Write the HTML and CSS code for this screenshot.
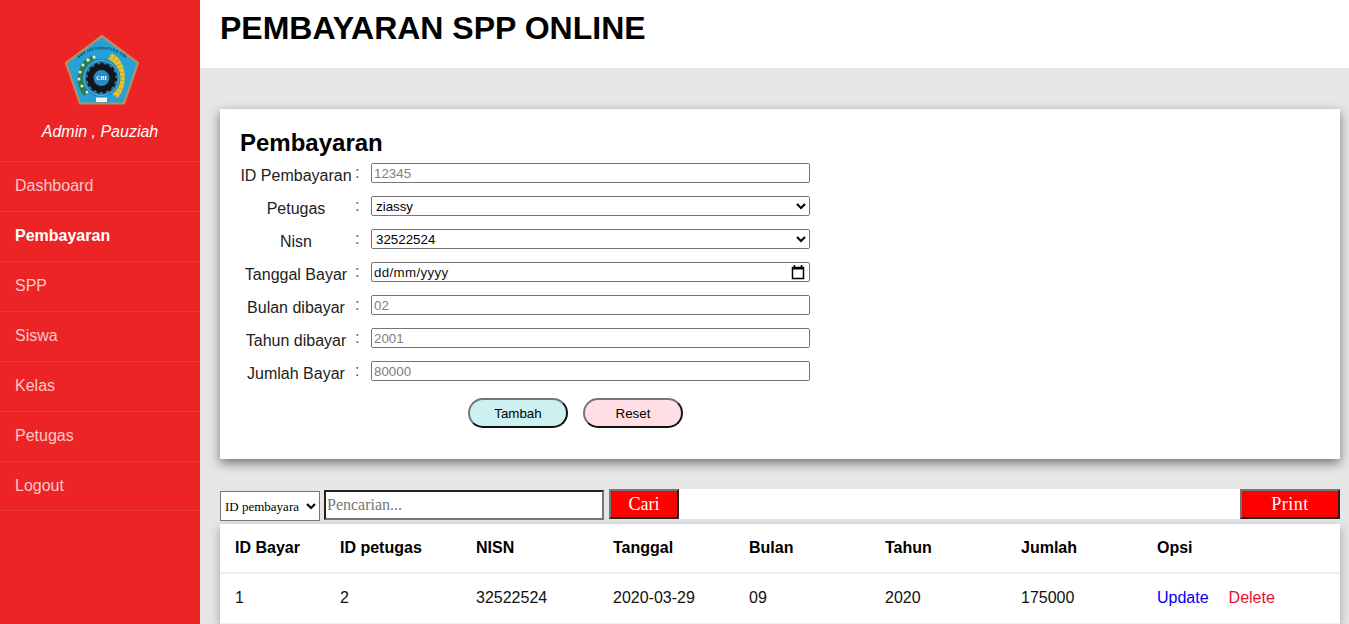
FILE: index.html
```html
<!DOCTYPE html>
<html lang="id">
<head>
<meta charset="utf-8">
<title>Pembayaran SPP Online</title>
<link rel="stylesheet" href="styles.css">
</head>
<body>
<div class="app">
  <aside class="sidebar">
    <div class="brand">
      <svg class="logo" viewBox="0 0 78 72" width="78" height="72" aria-hidden="true">
        <defs><path id="arc" d="M13 27 A35 35 0 0 1 65 27"/></defs>
        <polygon points="39,2 75,29 61,69.500 17,69.500 3,29" fill="#27a0d6" stroke="#b5915f" stroke-width="2.200" stroke-linejoin="round"/>
        <text class="logo-arc" fill="#173a5a" text-anchor="middle"><textPath href="#arc" startOffset="50%">SMK INFORMATIKA CBI</textPath></text>
        <g fill="none">
          <path d="M47 22 C60 29 62 49 52 62" stroke="#e4c62c" stroke-width="7"/>
          <path d="M47 22 C60 29 62 49 52 62" stroke="#c2a82e" stroke-width="7" stroke-dasharray="1 3"/>
          <path d="M30 24 C17 30 13 48 23 60" stroke="#2d7d49" stroke-width="5.500"/>
        </g>
        <g fill="#dfe8d8">
          <circle cx="31" cy="23" r="1.600"/><circle cx="25" cy="26" r="1.800"/><circle cx="20" cy="31" r="1.500"/>
          <circle cx="17" cy="38" r="1.600"/><circle cx="16" cy="45" r="1.500"/><circle cx="19" cy="52" r="1.600"/><circle cx="24" cy="58" r="1.500"/>
        </g>
        <circle cx="38.500" cy="44" r="19" fill="#1f7fb6"/>
        <circle cx="38.500" cy="44" r="17.500" fill="none" stroke="#6cc2e6" stroke-width=".8"/>
        <circle cx="38.500" cy="44" r="11" fill="none" stroke="#14161b" stroke-width="6"/>
        <circle cx="38.500" cy="44" r="14" fill="none" stroke="#14161b" stroke-width="3" stroke-dasharray="3 2.860"/>
        <circle cx="38.500" cy="44" r="7.500" fill="#2b8cc2"/>
        <text class="logo-cbi" x="38.500" y="46" fill="#fff" text-anchor="middle">CBI</text>
        <rect x="33" y="63.500" width="11" height="4.500" fill="#f3f3f0"/>
      </svg>
      <p class="user">Admin , Pauziah</p>
    </div>
    <nav class="menu">
      <a class="menu-item" href="#">Dashboard</a>
      <a class="menu-item active" href="#">Pembayaran</a>
      <a class="menu-item" href="#">SPP</a>
      <a class="menu-item" href="#">Siswa</a>
      <a class="menu-item" href="#">Kelas</a>
      <a class="menu-item" href="#">Petugas</a>
      <a class="menu-item" href="#">Logout</a>
    </nav>
  </aside>
  <div class="main">
    <header class="topbar"><h1>PEMBAYARAN SPP ONLINE</h1></header>
    <div class="content">
      <section class="card">
        <h2>Pembayaran</h2>
        <form class="form">
          <label>ID Pembayaran</label><span class="colon">:</span><input type="text" placeholder="12345">
          <label>Petugas</label><span class="colon">:</span><select><option>ziassy</option></select>
          <label>Nisn</label><span class="colon">:</span><select><option>32522524</option></select>
          <label>Tanggal Bayar</label><span class="colon">:</span>
          <div class="date-field">
            <span>dd/mm/yyyy</span>
            <svg class="cal" viewBox="0 0 14 15" width="14" height="15" aria-hidden="true">
              <path d="M3.500 0v2M10.500 0v2" stroke="#000" stroke-width="1.500" fill="none"/>
              <path d="M1.500 2.500h11v11h-11z" fill="none" stroke="#000" stroke-width="1.500"/>
              <rect x="1" y="2" width="12" height="2.500" fill="#000"/>
            </svg>
          </div>
          <label>Bulan dibayar</label><span class="colon">:</span><input type="text" placeholder="02">
          <label>Tahun dibayar</label><span class="colon">:</span><input type="text" placeholder="2001">
          <label>Jumlah Bayar</label><span class="colon">:</span><input type="text" placeholder="80000">
        </form>
        <div class="actions">
          <button class="pill pill-add" type="button">Tambah</button>
          <button class="pill pill-reset" type="button">Reset</button>
        </div>
      </section>
      <div class="toolbar">
        <select class="filter"><option>ID pembayara</option></select>
        <input class="search" type="text" placeholder="Pencarian...">
        <button class="red-btn" type="button">Cari</button>
        <div class="spacer"></div>
        <button class="red-btn print" type="button">Print</button>
      </div>
      <section class="table-wrap">
        <table>
          <colgroup>
            <col class="c1"><col class="c2"><col class="c3"><col class="c4"><col class="c4"><col class="c4"><col class="c4"><col class="c8">
          </colgroup>
          <thead>
            <tr><th>ID Bayar</th><th>ID petugas</th><th>NISN</th><th>Tanggal</th><th>Bulan</th><th>Tahun</th><th>Jumlah</th><th>Opsi</th></tr>
          </thead>
          <tbody>
            <tr><td>1</td><td>2</td><td>32522524</td><td>2020-03-29</td><td>09</td><td>2020</td><td>175000</td><td><a class="update" href="#">Update</a><a class="delete" href="#">Delete</a></td></tr>
          </tbody>
        </table>
      </section>
    </div>
  </div>
</div>
</body>
</html>
```

FILE: styles.css
```css
* { box-sizing: border-box; }
html, body { margin: 0; padding: 0; height: 100%; overflow: hidden; }
body { font-family: "Liberation Sans", Arial, sans-serif; background: #e6e6e6; color: #000; }
.app { display: flex; height: 624px; overflow: hidden; }

.sidebar { flex: 0 0 200px; background: #ec2426; }
.brand { height: 161px; padding-top: 34px; display: flex; flex-direction: column; align-items: center; }
.logo { display: block; margin-left: 3px; filter: blur(.35px); }
.logo-arc { font: bold 4px "Liberation Sans", sans-serif; letter-spacing: .3px; }
.logo-cbi { font: bold 6px "Liberation Serif", serif; }
.user { margin: 17px 0 0; font-size: 16px; font-style: italic; line-height: 18px; color: #fff; }
.menu { display: flex; flex-direction: column; }
.menu-item { height: 50px; padding-left: 15px; line-height: 48px; font-size: 16px; color: #fcc8c8; text-decoration: none; border-top: 1px solid #ef3636; }
.menu-item:last-child { border-bottom: 1px solid #ef3636; height: 50px; }
.menu-item.active { color: #fff; font-weight: bold; }

.main { flex: 1; min-width: 0; display: flex; flex-direction: column; }
.topbar { height: 68px; background: #fff; padding-left: 20px; flex: none; }
.topbar h1 { margin: 0; font-size: 32px; line-height: 56px; font-weight: bold; }
.content { padding: 41px 9px 0 20px; }

.card { height: 350px; background: #fff; padding: 20px 20px 0; box-shadow: 0 4px 10px rgba(0, 0, 0, .5); }
.card h2 { margin: 0; font-size: 24px; line-height: 28px; font-weight: bold; }
.form { display: grid; grid-template-columns: 112px 19px 439px; grid-auto-rows: 20px; row-gap: 13px; margin-top: 6px; }
.form label { font-size: 16px; line-height: 18px; text-align: center; color: #222; padding-top: 4px; white-space: nowrap; }
.colon { font-size: 16px; line-height: 18px; padding: 1px 0 0 3px; color: #555; }
.form input, .form select { width: 439px; height: 20px; font-family: "Liberation Sans", Arial, sans-serif; font-size: 13.333px; margin: 0; }
.form input { padding: 1px; }
.form input::placeholder { color: #808080; }
.date-field { width: 439px; height: 20px; display: flex; align-items: center; justify-content: space-between; padding: 0 4px 0 2px; border: 1px solid #767676; border-radius: 2px; background: #fff; font-size: 13.333px; letter-spacing: .35px; color: #111; }
.cal { display: block; }
.actions { display: flex; gap: 15px; margin: 17px 0 0 228px; }
.pill { width: 100px; height: 30px; border-radius: 15px; border: 2px solid; border-color: #767676 #111 #111 #767676; font-family: "Liberation Sans", Arial, sans-serif; font-size: 13.333px; color: #000; padding: 0; }
.pill-add { background: #cdf0f0; }
.pill-reset { background: #ffdfe5; }

.toolbar { display: flex; align-items: flex-start; height: 35px; margin-top: 30px; }
.filter { width: 100px; height: 30px; margin: 2px 4px 0 0; font-family: "Liberation Serif", serif; font-size: 13px; background: #fff; padding: 0; }
.search { width: 280px; height: 30px; margin: 1px 5px 0 0; font-family: "Liberation Serif", serif; font-size: 16px; padding: 1px; border: 2px solid; border-color: #222 #767676 #767676 #222; }
.search::placeholder { color: #757575; }
.red-btn { width: 70px; height: 30px; margin: 0; padding: 0; background: #ff0000; color: #fff; font-family: "Liberation Serif", serif; font-size: 18px; border: 2px solid; border-color: #767676 #222 #222 #767676; }
.spacer { flex: 1; height: 30px; background: #fff; }
.print { width: 100px; letter-spacing: .5px; }

.table-wrap { background: #fff; box-shadow: 0 4px 10px rgba(0, 0, 0, .3); }
table { width: 100%; border-collapse: collapse; table-layout: fixed; font-size: 16px; }
.c1 { width: 105px; }
.c2 { width: 136px; }
.c3 { width: 137px; }
.c4 { width: 136px; }
.c8 { width: 198px; }
th, td { padding: 0 15px; text-align: left; }
th { height: 49px; font-weight: bold; border-bottom: 2px solid #eee; }
td { height: 50px; color: #111; border-bottom: 1px solid #eee; }
.update { color: #0000ee; text-decoration: none; }
.delete { color: #e8112d; text-decoration: none; margin-left: 20px; }
```
